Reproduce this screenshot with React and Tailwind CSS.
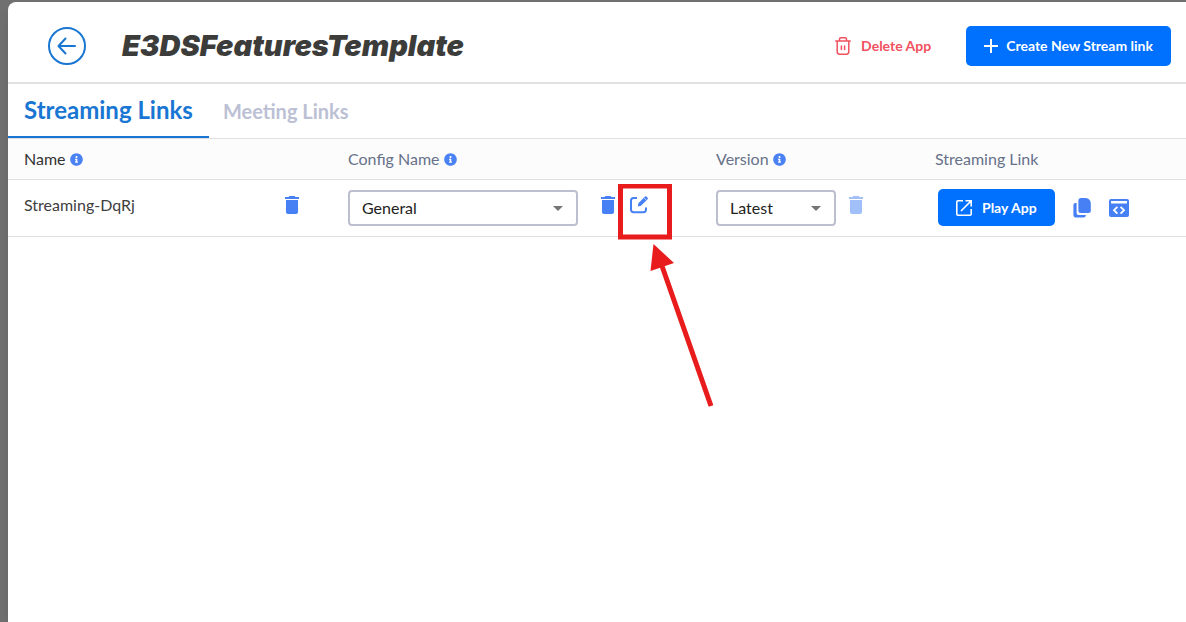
import React from 'react';
import { FaInfoCircle } from 'react-icons/fa';
import { MdDelete } from 'react-icons/md';

const ArrowLeftIcon = () => (
  <svg width="20" height="18" viewBox="0 0 20 18" fill="none" stroke="currentColor" strokeWidth="2" strokeLinecap="round" strokeLinejoin="round">
    <path d="M18 9H2M8.5 1.5L1.5 9L8.5 16.5" />
  </svg>
);

const TrashOutlineIcon = () => (
  <svg width="16" height="18" viewBox="0 0 16 18" fill="none" stroke="currentColor" strokeWidth="1.5" strokeLinecap="round">
    <path d="M0.8 4H15.2M4.5 4V2.2Q4.5 0.8 5.9 0.8H10.1Q11.5 0.8 11.5 2.2V4M2.2 4V14.8Q2.2 17.2 4.6 17.2H11.4Q13.8 17.2 13.8 14.8V4M6.4 9V12.5M9.6 9V12.5" />
  </svg>
);

const PlusIcon = () => (
  <svg width="14" height="14" viewBox="0 0 14 14" stroke="currentColor" strokeWidth="2">
    <path d="M7 0V14M0 7H14" />
  </svg>
);

const EditIcon = () => (
  <svg width="18" height="18" viewBox="0 0 18 18" fill="none">
    <path d="M7 2H3.6Q1 2 1 4.6V13.6Q1 16.2 3.6 16.2H13.4Q16 16.2 16 13.6V11.5" stroke="currentColor" strokeWidth="2" />
    <path d="M7.8 10.4L8.4 7.2L15 0.6Q15.7 -0.1 16.4 0.6L17.6 1.8Q18.2 2.5 17.6 3.2L11 9.8Z" fill="currentColor" />
    <path d="M13.7 1.6L16.6 4.5" stroke="#fff" strokeWidth="0.6" />
  </svg>
);

const OpenIcon = () => (
  <svg width="16" height="16" viewBox="0 0 16 16" fill="none" stroke="currentColor" strokeWidth="1.6">
    <path d="M7 0.8H2Q0.8 0.8 0.8 2V14Q0.8 15.2 2 15.2H14Q15.2 15.2 15.2 14V9M9.5 0.8H15.2V6.5M15 1L5 11" />
  </svg>
);

const CopyIcon = () => (
  <svg width="18" height="20" viewBox="0 0 18 20" fill="currentColor">
    <path d="M8 0H12.5Q17.8 0.6 17.8 6V12.5Q17.8 15 15.3 15H8Q5.4 15 5.4 12.5V2.5Q5.4 0 8 0Z" />
    <path d="M2.5 5H3.6V14.4Q3.6 17 6.2 17H13Q12.6 19.6 10.5 19.6H3.2Q0.4 19.6 0.4 16.8V7Q0.4 5 2.5 5Z" />
  </svg>
);

const EmbedIcon = () => (
  <svg width="20" height="18" viewBox="0 0 20 18">
    <rect width="20" height="18" rx="2" fill="currentColor" />
    <path d="M2 2H18V4.4H2Z" fill="#fff" />
    <path d="M8.4 7.8L5 11.2L8.4 14.6M11.6 7.8L15 11.2L11.6 14.6" fill="none" stroke="#fff" strokeWidth="1.8" />
  </svg>
);

const InfoButton = ({ label }) => (
  <button type="button" aria-label={label} className="pt-0.5 text-[#4a82f4]">
    <FaInfoCircle size={13} className="block" />
  </button>
);

const DeleteButton = ({ label, disabled }) => (
  <button type="button" aria-label={label} disabled={disabled} className="text-[#4680f4] disabled:opacity-50">
    <MdDelete size={24} className="block" />
  </button>
);

// labelled by the column heading with the same id
const SelectBox = ({ id, children }) => (
  <div className="relative w-full">
    <select
      id={id}
      className="block w-full h-9 appearance-none rounded border-2 border-[#bcbfce] bg-white pl-3 pr-8 text-base leading-6 text-[#222]"
    >
      {children}
    </select>
    <svg width="10" height="5" viewBox="0 0 10 5" className="pointer-events-none absolute right-[15px] top-4 text-[#757575]">
      <path d="M0 0H10L5 5Z" fill="currentColor" />
    </svg>
  </div>
);

// red box and arrow pointing at the edit button
const EditHighlight = () => (
  <svg width="96" height="226" viewBox="0 0 96 226" className="pointer-events-none absolute -left-3 -top-3 z-10">
    <rect x="2.5" y="2" width="49" height="51" fill="none" stroke="#e81c1c" strokeWidth="5" />
    <path d="M35.5 60L56 79L32.5 87Z" fill="#e81c1c" />
    <path d="M44 82L93 222" stroke="#e81c1c" strokeWidth="5" />
  </svg>
);

const Header = () => (
  <header className="flex items-center justify-between border-b-2 border-[#e2e2e2] h-[82px] pl-10 pr-[15px] pt-2">
    <div className="flex items-center gap-9">
      <button type="button" aria-label="Back" className="flex size-[38px] items-center justify-center rounded-full border-2 border-[#1976d2] text-[#1976d2]">
        <ArrowLeftIcon />
      </button>
      <h1 className="font-['Inter',sans-serif] text-[29px] leading-9 font-black italic text-[#3c3c3b]">
        E3DSFeaturesTemplate
      </h1>
    </div>
    <div className="flex items-center gap-[35px] text-sm font-bold">
      <button type="button" className="flex items-center gap-2.5 text-[#f1515f]">
        <TrashOutlineIcon />
        Delete App
      </button>
      <button type="button" className="flex h-10 items-center gap-2 rounded-[5px] bg-[#0070ff] px-[18px] text-white">
        <PlusIcon />
        Create New Stream link
      </button>
    </div>
  </header>
);

const Tabs = () => (
  <nav className="flex h-[55px] border-b border-[#e0e0e0] font-bold">
    <a href="#streaming" className="flex items-center border-b-2 border-[#1976d2] px-4 text-2xl text-[#1976d2]">
      Streaming Links
    </a>
    <a href="#meeting" className="flex items-center px-3.5 text-xl text-[#bcc0d4]">
      Meeting Links
    </a>
  </nav>
);

const LinksTable = () => (
  <table className="w-full table-fixed text-left text-base">
    <colgroup>
      <col className="w-[324px]" />
      <col className="w-[368px]" />
      <col className="w-[219px]" />
      <col />
    </colgroup>
    <thead className="bg-[#fcfcfc] text-[#67718a]">
      <tr className="h-10 border-b border-[#e0e0e0]">
        <th className="px-4 font-normal text-[#333]">
          <div className="flex items-center gap-1">Name <InfoButton label="About names" /></div>
        </th>
        <th className="px-4 font-normal">
          <div className="flex items-center gap-1">
            <label htmlFor="config">Config Name</label>
            <InfoButton label="About configs" />
          </div>
        </th>
        <th className="px-4 font-normal">
          <div className="flex items-center gap-1">
            <label htmlFor="version">Version</label>
            <InfoButton label="About versions" />
          </div>
        </th>
        <th className="px-4 font-normal">Streaming Link</th>
      </tr>
    </thead>
    <tbody>
      <tr className="h-[57px] border-b border-[#e0e0e0]">
        <td className="pl-4 pr-7">
          <div className="flex items-center justify-between pb-1.5 text-[#404040]">
            Streaming-DqRj
            <DeleteButton label="Delete streaming link" />
          </div>
        </td>
        <td className="pl-4">
          <div className="flex items-start">
            <div className="w-[230px]">
              <SelectBox id="config">
                <option>General</option>
              </SelectBox>
            </div>
            <div className="ml-[18px] flex items-center gap-2.5 pt-[3px]">
              <DeleteButton label="Delete config" />
              <div className="relative">
                <button type="button" aria-label="Edit config" className="block text-[#4680f4]">
                  <EditIcon />
                </button>
                <EditHighlight />
              </div>
            </div>
          </div>
        </td>
        <td className="pl-4">
          <div className="flex items-start gap-2">
            <div className="w-[120px]">
              <SelectBox id="version">
                <option>Latest</option>
              </SelectBox>
            </div>
            <div className="pt-[3px]">
              <DeleteButton label="Delete version" disabled />
            </div>
          </div>
        </td>
        <td className="pl-[19px]">
          <div className="flex items-center text-[#4680f4]">
            <button type="button" className="flex h-[37px] items-center gap-2.5 rounded-[5px] bg-[#0070ff] px-[18px] text-sm font-bold text-white">
              <OpenIcon />
              Play App
            </button>
            <button type="button" aria-label="Copy link" className="ml-[18px]">
              <CopyIcon />
            </button>
            <button type="button" aria-label="Embed code" className="ml-[18px]">
              <EmbedIcon />
            </button>
          </div>
        </td>
      </tr>
    </tbody>
  </table>
);

export default function App() {
  return (
    <div className="flex min-h-screen bg-[#707070] pl-2 pt-0.5 font-['Lato','Noto_Sans',sans-serif]">
      <main className="min-w-0 flex-1 overflow-hidden rounded-tl-lg bg-white shadow-lg">
        <Header />
        <Tabs />
        <LinksTable />
      </main>
    </div>
  );
}
